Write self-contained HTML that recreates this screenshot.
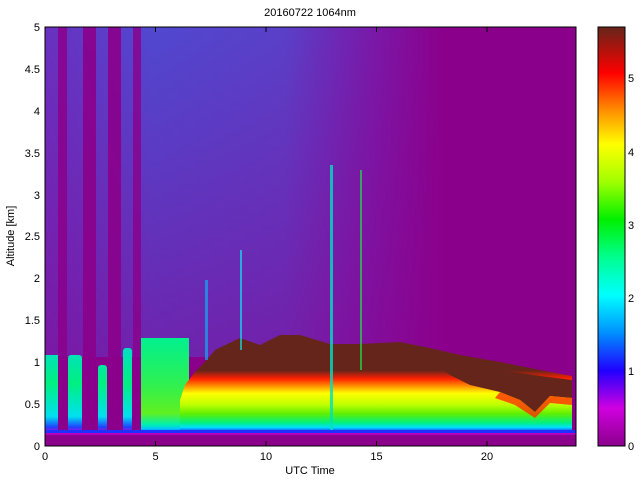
<!DOCTYPE html>
<html><head><style>
html,body{margin:0;padding:0;background:#fff;}
svg{display:block;font-family:"Liberation Sans",sans-serif;}
</style></head><body>
<svg width="640" height="480" viewBox="0 0 640 480" xmlns="http://www.w3.org/2000/svg">
<defs>
<linearGradient id="cb" x1="0" y1="1" x2="0" y2="0">
<stop offset="0" stop-color="#8b008b"/>
<stop offset="0.09" stop-color="#d000e0"/>
<stop offset="0.18" stop-color="#2000ff"/>
<stop offset="0.27" stop-color="#0090ff"/>
<stop offset="0.36" stop-color="#00ffff"/>
<stop offset="0.45" stop-color="#00ff90"/>
<stop offset="0.54" stop-color="#00f000"/>
<stop offset="0.63" stop-color="#a0ff00"/>
<stop offset="0.72" stop-color="#ffff00"/>
<stop offset="0.80" stop-color="#ff9000"/>
<stop offset="0.89" stop-color="#ff0000"/>
<stop offset="1" stop-color="#65251a"/>
</linearGradient>
<linearGradient id="top" x1="0" y1="0" x2="1" y2="0">
<stop offset="0" stop-color="#6a30c0"/>
<stop offset="0.2" stop-color="#5048d0"/>
<stop offset="0.45" stop-color="#5a40c8"/>
<stop offset="0.62" stop-color="#7a18a8"/>
<stop offset="0.75" stop-color="#8b008b"/>
</linearGradient>
<linearGradient id="topv" x1="0" y1="0" x2="0" y2="1">
<stop offset="0" stop-color="#8b008b" stop-opacity="0"/>
<stop offset="1" stop-color="#8b008b" stop-opacity="0.5"/>
</linearGradient>
<linearGradient id="blob" gradientUnits="userSpaceOnUse" x1="0" y1="350" x2="0" y2="433">
<stop offset="0" stop-color="#00e0c0"/>
<stop offset="0.4" stop-color="#00f080"/>
<stop offset="0.8" stop-color="#00e0f0"/>
<stop offset="0.93" stop-color="#2040ff"/>
<stop offset="1" stop-color="#d000e0"/>
</linearGradient>
<linearGradient id="block" gradientUnits="userSpaceOnUse" x1="0" y1="338" x2="0" y2="432">
<stop offset="0" stop-color="#00f090"/>
<stop offset="0.5" stop-color="#30f050"/>
<stop offset="0.8" stop-color="#60f020"/>
<stop offset="0.92" stop-color="#00f0b0"/>
<stop offset="0.97" stop-color="#00c0ff"/>
<stop offset="1" stop-color="#2020ff"/>
</linearGradient>
<linearGradient id="main" gradientUnits="userSpaceOnUse" x1="0" y1="340" x2="0" y2="432">
<stop offset="0" stop-color="#65251a"/>
<stop offset="0.33" stop-color="#65251a"/>
<stop offset="0.42" stop-color="#ff2000"/>
<stop offset="0.5" stop-color="#ff9000"/>
<stop offset="0.58" stop-color="#ffff00"/>
<stop offset="0.7" stop-color="#c0ff00"/>
<stop offset="0.8" stop-color="#60f000"/>
<stop offset="0.9" stop-color="#00f080"/>
<stop offset="0.95" stop-color="#00e0ff"/>
<stop offset="1" stop-color="#2020ff"/>
</linearGradient>
</defs>
<text x="310" y="16" font-size="11" text-anchor="middle">20160722 1064nm</text>
<rect x="45" y="27" width="531" height="419" fill="#8b008b"/>
<rect x="45" y="27" width="531" height="330" fill="url(#top)"/>
<rect x="45" y="27" width="531" height="330" fill="url(#topv)"/>
<rect x="58" y="27" width="9" height="419" fill="#8b008b" opacity="0.85"/>
<rect x="83" y="27" width="13" height="419" fill="#8b008b" opacity="0.9"/>
<rect x="108" y="27" width="13" height="419" fill="#8b008b" opacity="0.9"/>
<rect x="133" y="27" width="8" height="419" fill="#8b008b" opacity="0.8"/>
<rect x="45" y="355" width="13" height="78" fill="url(#blob)"/>
<rect x="68" y="355" width="14" height="78" fill="url(#blob)" rx="3"/>
<rect x="98" y="365" width="9" height="68" fill="url(#blob)" rx="3"/>
<rect x="123" y="348" width="9" height="85" fill="url(#blob)" rx="3"/>
<rect x="141" y="338" width="48" height="94" fill="url(#block)"/>
<!-- main layer -->
<polygon points="180,432 180,400 185,385 195,372 205,362 215,350 240,338 260,345 280,335 300,335 330,344 360,344 400,342 430,348 460,355 500,362 540,370 572,376 572,432" fill="url(#main)"/>
<!-- deep brown right part -->
<polygon points="430,360 470,365 500,370 540,376 572,380 572,398 550,396 535,412 520,400 500,392 470,385 450,375" fill="#65251a"/>
<polygon points="500,392 520,400 535,412 550,396 572,398 572,405 550,403 535,418 515,405 495,398" fill="#ff3000" opacity="0.8"/>
<rect x="330" y="165" width="3" height="265" fill="#00e0c0" opacity="0.8"/>
<rect x="360" y="170" width="2" height="200" fill="#20e040" opacity="0.7"/>
<rect x="240" y="250" width="2" height="100" fill="#00ffff" opacity="0.6"/>
<rect x="205" y="280" width="3" height="80" fill="#00c0ff" opacity="0.6"/>
<rect x="45" y="430" width="531" height="3" fill="#2030ff"/>
<rect x="45" y="433" width="531" height="2" fill="#d000e0" opacity="0.6"/>
<rect x="45" y="27" width="531" height="419" fill="none" stroke="#000" stroke-width="1"/>
<g stroke="#000" stroke-width="1">
<line x1="155.5" y1="446" x2="155.5" y2="441"/><line x1="266" y1="446" x2="266" y2="441"/><line x1="376.5" y1="446" x2="376.5" y2="441"/><line x1="487" y1="446" x2="487" y2="441"/>
<line x1="155.5" y1="27" x2="155.5" y2="32"/><line x1="266" y1="27" x2="266" y2="32"/><line x1="376.5" y1="27" x2="376.5" y2="32"/><line x1="487" y1="27" x2="487" y2="32"/>
</g>
<g font-size="11" text-anchor="middle">
<text x="45" y="460">0</text><text x="155.5" y="460">5</text><text x="266" y="460">10</text><text x="376.5" y="460">15</text><text x="487" y="460">20</text>
<text x="310" y="474">UTC Time</text>
</g>
<g font-size="11" text-anchor="end">
<text x="40" y="450">0</text><text x="40" y="408">0.5</text><text x="40" y="366">1</text><text x="40" y="324">1.5</text><text x="40" y="282">2</text><text x="40" y="240">2.5</text><text x="40" y="199">3</text><text x="40" y="157">3.5</text><text x="40" y="115">4</text><text x="40" y="73">4.5</text><text x="40" y="31">5</text>
</g>
<text x="14" y="236" font-size="11" text-anchor="middle" transform="rotate(-90 14 236)">Altitude [km]</text>
<rect x="598" y="27" width="27" height="419" fill="url(#cb)" stroke="#000" stroke-width="1"/>
<g font-size="11">
<text x="628" y="450">0</text><text x="628" y="375">1</text><text x="628" y="302">2</text><text x="628" y="229">3</text><text x="628" y="156">4</text><text x="628" y="82">5</text>
</g>
</svg>
</body></html>
